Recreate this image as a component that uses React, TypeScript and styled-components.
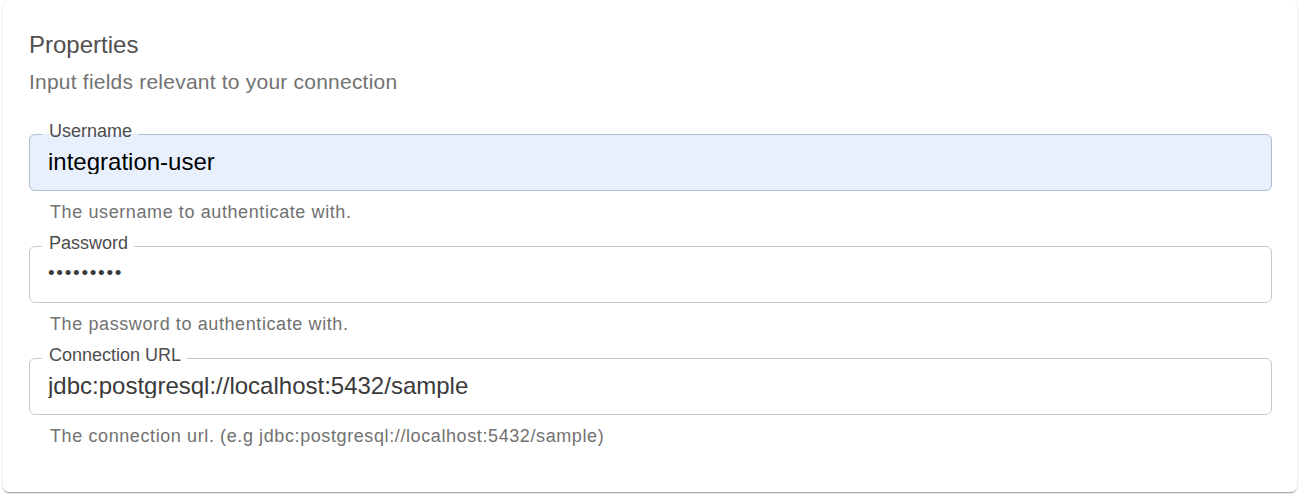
import styled, { createGlobalStyle } from "styled-components";

const GlobalStyle = createGlobalStyle`
  html, body {
    margin: 0;
    padding: 0;
    background: #fff;
  }
  body {
    font-family: "Liberation Sans", Arial, sans-serif;
  }
`;

const Card = styled.section`
  margin: 0 3px 2px 3px;
  padding: 27px 25px 47px 26px;
  background: #fff;
  border-radius: 6px;
  box-shadow: 0 2px 1px -1px rgba(0, 0, 0, 0.2), 0 1px 1px 0 rgba(0, 0, 0, 0.14),
    0 1px 3px 0 rgba(0, 0, 0, 0.12);
`;

const Header = styled.header`
  display: flex;
  flex-direction: column;
  gap: 4px;
  margin-bottom: 25px;
`;

const Title = styled.h2`
  margin: 0;
  font-size: 24px;
  line-height: 36px;
  font-weight: 400;
  color: #505050;
`;

const Subtitle = styled.p`
  margin: 0;
  font-size: 21px;
  line-height: 30px;
  letter-spacing: 0.22px;
  color: #727272;
`;

const Form = styled.form`
  display: flex;
  flex-direction: column;
  gap: 13px;
`;

const Group = styled.div`
  display: flex;
  flex-direction: column;
`;

const Field = styled.fieldset<{ $filled?: boolean }>`
  margin: 0;
  min-width: 0;
  padding: 3px 0 16px;
  border: 1px solid ${(p) => (p.$filled ? "#b4bccb" : "#c8c8c8")};
  border-radius: 6px;
  background: ${(p) => (p.$filled ? "#e8f0fe" : "transparent")};
`;

const Legend = styled.legend`
  margin-left: 12px;
  padding: 0 6px 7px 7px;
  font-size: 18px;
  line-height: 18px;
  color: #4d4d4d;
`;

const Input = styled.input<{ $dark?: boolean; $secret?: boolean }>`
  display: block;
  box-sizing: border-box;
  width: 100%;
  height: 24px;
  margin: 0;
  padding: ${(p) => (p.$secret ? "0 18px 3px" : "0 18px")};
  border: 0;
  outline: none;
  background: transparent;
  font-family: "Liberation Sans", Arial, sans-serif;
  font-size: ${(p) => (p.$secret ? "19px" : "24px")};
  letter-spacing: ${(p) => (p.$secret ? "1.7px" : "0")};
  line-height: 24px;
  color: ${(p) => (p.$dark ? "#000" : "#3a3a3a")};
`;

const Helper = styled.p`
  margin: 12px 0 0 21px;
  font-size: 18px;
  line-height: 18px;
  letter-spacing: 0.6px;
  color: #717171;
`;

interface IField {
  id: string;
  label: string;
  type: string;
  value: string;
  help: string;
  filled?: boolean;
}

const fields: IField[] = [
  {
    id: "username",
    label: "Username",
    type: "text",
    value: "integration-user",
    help: "The username to authenticate with.",
    filled: true,
  },
  {
    id: "password",
    label: "Password",
    type: "password",
    value: "secretpwd",
    help: "The password to authenticate with.",
  },
  {
    id: "url",
    label: "Connection URL",
    type: "text",
    value: "jdbc:postgresql://localhost:5432/sample",
    help: "The connection url. (e.g jdbc:postgresql://localhost:5432/sample)",
  },
];

const App = () => {
  return (
    <>
      <GlobalStyle />
      <Card>
        <Header>
          <Title>Properties</Title>
          <Subtitle>Input fields relevant to your connection</Subtitle>
        </Header>
        <Form onSubmit={(e) => e.preventDefault()}>
          {fields.map((f) => (
            <Group key={f.id}>
              <Field $filled={f.filled}>
                <Legend>{f.label}</Legend>
                <Input
                  id={f.id}
                  type={f.type}
                  defaultValue={f.value}
                  $dark={f.filled}
                  $secret={f.type === "password"}
                />
              </Field>
              <Helper>{f.help}</Helper>
            </Group>
          ))}
        </Form>
      </Card>
    </>
  );
};

export default App;
